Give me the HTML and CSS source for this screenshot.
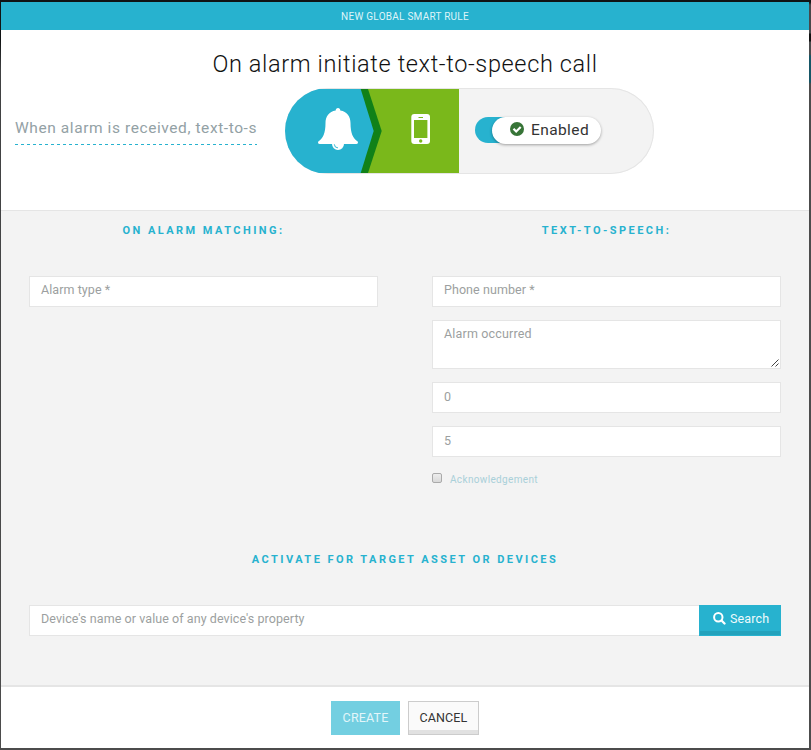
FILE: index.html
```html
<!DOCTYPE html>
<html lang="en">
<head>
<meta charset="utf-8">
<title>New global smart rule</title>
<link rel="stylesheet" href="styles.css">
</head>
<body>
<main class="modal">
  <header class="modal-header"><span>NEW GLOBAL SMART RULE</span></header>
  <section class="intro">
    <h1 class="title"><span>On alarm initiate text-to-speech call</span></h1>
    <div class="rule">
      <div class="rule-name"><span>When alarm is received, text-to-s</span></div>
      <div class="pill">
        <svg class="flow" width="174" height="84" viewBox="285 89 174 84">
          <path fill="#7ab81b" d="M360 89h99v84h-99z"/>
          <path fill="#118118" d="M359 89h9l13.7 42L368 173h-9z"/>
          <path fill="#27b2cf" d="M285 89h75.7l13 42-13 42H285z"/>
          <path fill="#fff" d="M338 108c1.400 0 2.300 1 2.300 2.500 6.700 1.100 10.200 6 10.200 12.500 0 10 2.500 15.500 7.200 18.600.7 1.300.1 2.400-1.400 2.400h-12.300a6 6 0 0 1-12 0h-12.300c-1.500 0-2.100-1.100-1.400-2.400 4.700-3.100 7.200-8.600 7.200-18.600 0-6.500 3.500-11.400 10.200-12.500 0-1.500.9-2.500 2.300-2.500z"/>
          <path fill="none" stroke="#27b2cf" stroke-width=".9" d="M334.300 144.300a3.800 3.800 0 0 0 3.700 3.600"/>
          <rect fill="#fff" x="411.300" y="114" width="18.700" height="30" rx="3"/>
          <path fill="#7ab81b" d="M414 120h13.400v18H414zM418.500 117h4.500v1h-4.500z"/>
          <circle cx="420.700" cy="141" r="1.700" fill="#7ab81b"/>
        </svg>
        <div class="toggle">
          <div class="knob">
            <svg width="14" height="14" viewBox="0 0 14 14"><circle cx="7" cy="7" r="7" fill="#377437"/><path d="M3.500 6.700l2.700 2.800 4.500-4.500" fill="none" stroke="#fff" stroke-width="2.200"/></svg>
            <span>Enabled</span>
          </div>
        </div>
      </div>
    </div>
  </section>
  <section class="settings">
    <div class="columns">
      <div class="column">
        <h2 class="heading"><span>ON ALARM MATCHING:</span></h2>
        <div class="field"><span>Alarm type *</span></div>
      </div>
      <div class="column">
        <h2 class="heading"><span>TEXT-TO-SPEECH:</span></h2>
        <div class="field"><span>Phone number *</span></div>
        <div class="field area"><span>Alarm occurred</span>
          <svg class="grip" width="8" height="8" viewBox="0 0 8 8"><path d="M.5 7.500l7-7M4.500 7.500l3-3" stroke="#444" fill="none"/></svg>
        </div>
        <div class="field number"><span>0</span></div>
        <div class="field number"><span>5</span></div>
        <div class="check"><i class="box"></i><span>Acknowledgement</span></div>
      </div>
    </div>
    <h2 class="heading target"><span>ACTIVATE FOR TARGET ASSET OR DEVICES</span></h2>
    <div class="search">
      <div class="field"><span>Device's name or value of any device's property</span></div>
      <div class="search-btn">
        <svg width="13" height="13" viewBox="0 0 13 13"><circle cx="5.300" cy="5.300" r="4.200" fill="none" stroke="#fff" stroke-width="2"/><path d="M8.500 8.500l3 3" stroke="#fff" stroke-width="2.300" stroke-linecap="round"/></svg>
        <span>Search</span>
      </div>
    </div>
  </section>
  <footer class="footer">
    <div class="btn create"><span>CREATE</span></div>
    <div class="btn cancel"><span>CANCEL</span></div>
  </footer>
</main>
</body>
</html>
```
FILE: styles.css
```css
* { box-sizing: border-box; }
body {
  margin: 0;
  height: 750px;
  padding: 2px 2px 2px 1px;
  overflow: hidden;
  background:
    linear-gradient(#101314 2px, #47484a 5px, #47484a 33px, #111 34px, #111 41px, #4a4b4c 42px, #4a4b4c 54px, #165666 56px, #165666 82px, #4c4c4c 84px) 100% 0 / 2px 100% no-repeat,
    linear-gradient(#101314 2px, #101314 40px, #404142 70px, #4c4c4c);
  font-family: Roboto, sans-serif;
}
span { white-space: nowrap; }
.modal { display: flex; flex-direction: column; height: 746px; background: #fff; }
.modal-header {
  height: 28px; line-height: 29px; text-align: center;
  background: #27b2cf; color: #dff5f9; font-size: 10px; letter-spacing: .25px;
}
.intro { height: 180px; }
.title {
  margin: 0; padding-top: 18px; height: 58px; line-height: 32px;
  text-align: center; font-size: 23.5px; font-weight: 300; color: #111; letter-spacing: .63px;
}
.rule { display: flex; }
.rule-name {
  width: 242px; height: 57px; margin: 0 28px 0 14px; padding-top: 28px; line-height: 24px;
  font-size: 15.5px; font-weight: 400; color: #93a1a5; letter-spacing: .58px;
  background: repeating-linear-gradient(90deg, #27b2cf 0 3px, transparent 3px 6px) 0 100% / 100% 1px no-repeat;
}
.pill {
  display: flex; align-items: center; width: 369px; height: 86px; overflow: hidden;
  background: #f3f3f3; box-shadow: inset 0 0 0 1px #e5e5e5; border-radius: 43px;
}
.flow { display: block; flex: none; }
.toggle {
  width: 100px; height: 26px; margin: -2px 0 0 16px; padding-left: 17px;
  background: #27b2cf; border-radius: 13px;
}
.knob {
  display: flex; align-items: center; gap: 7px; width: 109px; height: 27px; padding-left: 18px;
  background: #fff; border-radius: 14px; box-shadow: 0 1px 3px rgba(0,0,0,.35);
  font-size: 15.5px; color: #333; letter-spacing: .4px;
}
.knob svg { margin-top: -3px; }
.knob span { margin-top: -2px; }
.settings { height: 477px; padding: 0 28px; background: #f3f3f3; border-top: 1px solid #e5e5e5; border-bottom: 2px solid #e5e5e5; }
.columns { display: grid; grid-template-columns: 349px 349px; gap: 54px; height: 337px; }
.heading {
  margin: 0; height: 65px; padding-top: 11px; line-height: 18px; text-align: center;
  font-size: 11px; font-weight: 700; color: #27b2cf; letter-spacing: 2.45px;
}
.field {
  height: 31px; margin-bottom: 13px; padding: 0 11px; line-height: 26px;
  background: #fff; border: 1px solid #e5e5e5; color: #9c9fa0; font-size: 12.5px; letter-spacing: .07px;
}
.number { line-height: 28px; }
.area { display: flex; justify-content: space-between; height: 49px; padding-right: 1px; letter-spacing: .17px; }
.grip { align-self: flex-end; margin-bottom: 1px; }
.check { display: flex; align-items: center; gap: 8px; height: 18px; font-size: 10px; color: #a9d0d9; letter-spacing: .35px; }
.check span { padding-top: 1px; }
.box { width: 10px; height: 10px; margin-top: -2px; border: 1px solid #aaa; border-radius: 2px; background: linear-gradient(#ededed, #d9d9d9); }
.target { height: 57px; padding-top: 3px; }
.search { display: flex; }
.search .field { flex: 1; border-right: 0; }
.search-btn {
  display: flex; align-items: center; width: 82px; height: 31px; padding: 0 0 4px 14px; gap: 4px;
  background: #27b2cf; box-shadow: inset 1px 0 #27b2cf, inset -1px 0 #27b2cf, inset 0 -1px #27b2cf, inset 0 -5px #23a2bc;
  color: #eefafc; font-size: 12.5px; letter-spacing: .15px;
}
.search-btn span { margin-top: -1px; }
.footer { display: flex; justify-content: center; gap: 8px; padding-top: 14px; height: 61px; }
.btn { height: 34px; line-height: 34px; text-align: center; font-size: 12.5px; }
.create { width: 69px; background: #73cfe1; color: #e3f6fa; letter-spacing: .15px; }
.cancel { width: 71px; line-height: 32px; background: #fafafa; border: 1px solid #ccc; box-shadow: inset 0 -4px #e1e1e1; color: #333; letter-spacing: .1px; }
```
